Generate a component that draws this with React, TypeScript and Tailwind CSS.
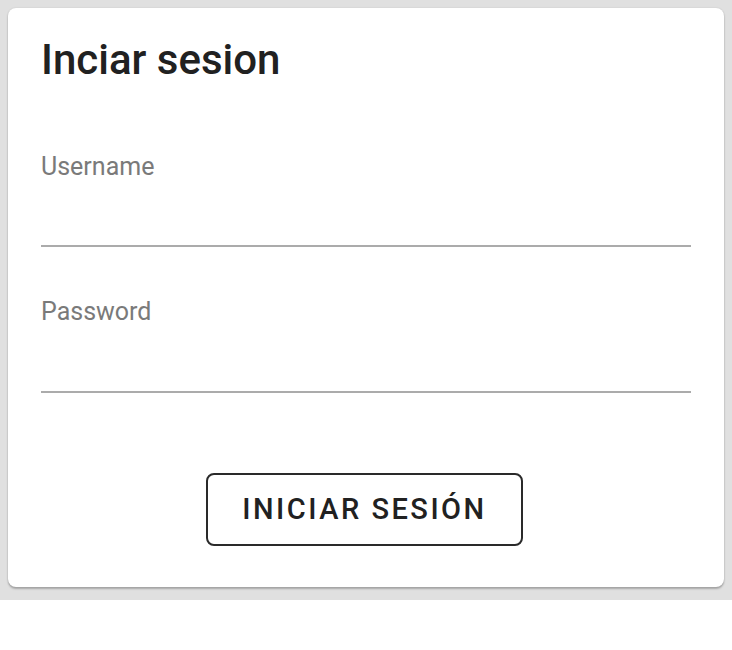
import React, { useState } from "react";

const App: React.FC = () => {
  const [username, setUsername] = useState("");
  const [password, setPassword] = useState("");

  return (
    <div className="h-[600px] bg-[#e0e0e0] p-2" style={{ fontFamily: "Roboto, 'Liberation Sans', sans-serif" }}>
      <div className="rounded-lg bg-white px-[33px] pt-[28px] pb-[41px] shadow-[0_2px_2px_rgba(0,0,0,0.25),0_0_2px_rgba(0,0,0,0.12)]">
        {/* Title */}
        <h1 className="text-[42px] font-medium leading-[48px] text-[#212121]">Inciar sesion</h1>

        {/* Username */}
        <div className="mt-[71px]">
          <label className="block text-[25px] leading-6 text-[#7a7a7a]">Username</label>
          <input
            type="text"
            value={username}
            onChange={(e) => setUsername(e.target.value)}
            className="block h-[68px] w-full border-b-2 border-[#ababab] text-[24px] text-[#212121] outline-none"
          />
        </div>

        {/* Password */}
        <div className="mt-[53px]">
          <label className="block text-[25px] leading-6 text-[#7a7a7a]">Password</label>
          <input
            type="password"
            value={password}
            onChange={(e) => setPassword(e.target.value)}
            className="block h-[69px] w-full border-b-2 border-[#ababab] text-[24px] text-[#212121] outline-none"
          />
        </div>

        {/* Submit */}
        <div className="mt-[80px] flex justify-center pr-[3px]">
          <button className="h-[73px] w-[317px] rounded-lg border-2 border-[#2a2a2a] text-[29px] font-medium uppercase tracking-[2.5px] text-[#212121]">
            Iniciar sesión
          </button>
        </div>
      </div>
    </div>
  );
};

export default App;
